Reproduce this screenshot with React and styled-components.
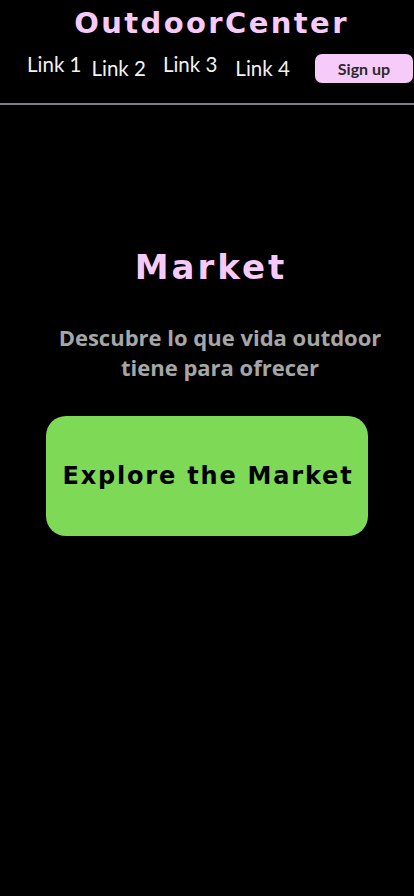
import React from 'react'
import styled, { createGlobalStyle } from 'styled-components'

const Global = createGlobalStyle`
  body {
    margin: 0;
    background: #000;
    font-family: 'Lato', sans-serif;
  }
`

const Page = styled.div`
  width: 414px;
  min-height: 896px;
  background: #000;
  overflow: hidden;
`

const Header = styled.header`
  display: flex;
  flex-direction: column;
  align-items: center;
  padding-top: 5px;
  height: 105px;
  border-bottom: 2px solid #80808f;
  box-sizing: border-box;
`

const Brand = styled.h1`
  margin: 0 0 0 9px;
  font-family: 'DejaVu Sans', sans-serif;
  font-weight: bold;
  font-size: 29px;
  letter-spacing: 2.4px;
  line-height: 36px;
  color: #f7cbf9;
`

const Nav = styled.nav`
  align-self: stretch;
  display: flex;
  align-items: flex-start;
  padding-left: 27px;
  margin-top: 11px;
`

const NavLink = styled.a`
  font-family: 'Lato', sans-serif;
  font-size: 20.5px;
  line-height: 24px;
  color: #f2f2f2;
  margin-right: ${p => p.$gap}px;
  margin-top: ${p => (p.$low ? 4 : 0)}px;
  white-space: nowrap;
`

const SignUp = styled.button`
  margin-left: auto;
  margin-right: 1px;
  margin-top: 2px;
  width: 98px;
  height: 29px;
  border: none;
  border-radius: 7px;
  background: #f7cbf9;
  color: #2a2a2a;
  font-family: 'Lato', sans-serif;
  font-weight: bold;
  font-size: 16px;
  padding: 0;
`

const Hero = styled.main`
  display: flex;
  flex-direction: column;
  align-items: center;
  padding-top: 142px;
`

const Heading = styled.h2`
  margin: 0 0 0 8px;
  font-family: 'DejaVu Sans', sans-serif;
  font-weight: bold;
  font-size: 34px;
  letter-spacing: 3px;
  line-height: 40px;
  color: #f7cbf9;
`

const Lead = styled.p`
  margin: 35px 0 0 26px;
  font-family: 'Open Sans', sans-serif;
  font-weight: bold;
  font-size: 22px;
  line-height: 30px;
  text-align: center;
  color: #a6a6a6;
`

const Cta = styled.button`
  margin-top: 34px;
  width: 322px;
  height: 120px;
  border: none;
  border-radius: 20px;
  background: #7ed957;
  color: #000;
  font-family: 'DejaVu Sans', sans-serif;
  font-weight: bold;
  font-size: 24px;
  letter-spacing: 1.8px;
  padding: 0 0 0 2px;
`

const links = [
  { label: 'Link 1', gap: 10, low: false },
  { label: 'Link 2', gap: 17, low: true },
  { label: 'Link 3', gap: 18, low: false },
  { label: 'Link 4', gap: 0, low: true },
]

const App = () => (
  <Page>
    <Global />
    <Header>
      <Brand>OutdoorCenter</Brand>
      <Nav>
        {links.map(l => (
          <NavLink key={l.label} $gap={l.gap} $low={l.low}>{l.label}</NavLink>
        ))}
        <SignUp>Sign up</SignUp>
      </Nav>
    </Header>
    <Hero>
      <Heading>Market</Heading>
      <Lead>Descubre lo que vida outdoor<br />tiene para ofrecer</Lead>
      <Cta>Explore the Market</Cta>
    </Hero>
  </Page>
)

export default App
